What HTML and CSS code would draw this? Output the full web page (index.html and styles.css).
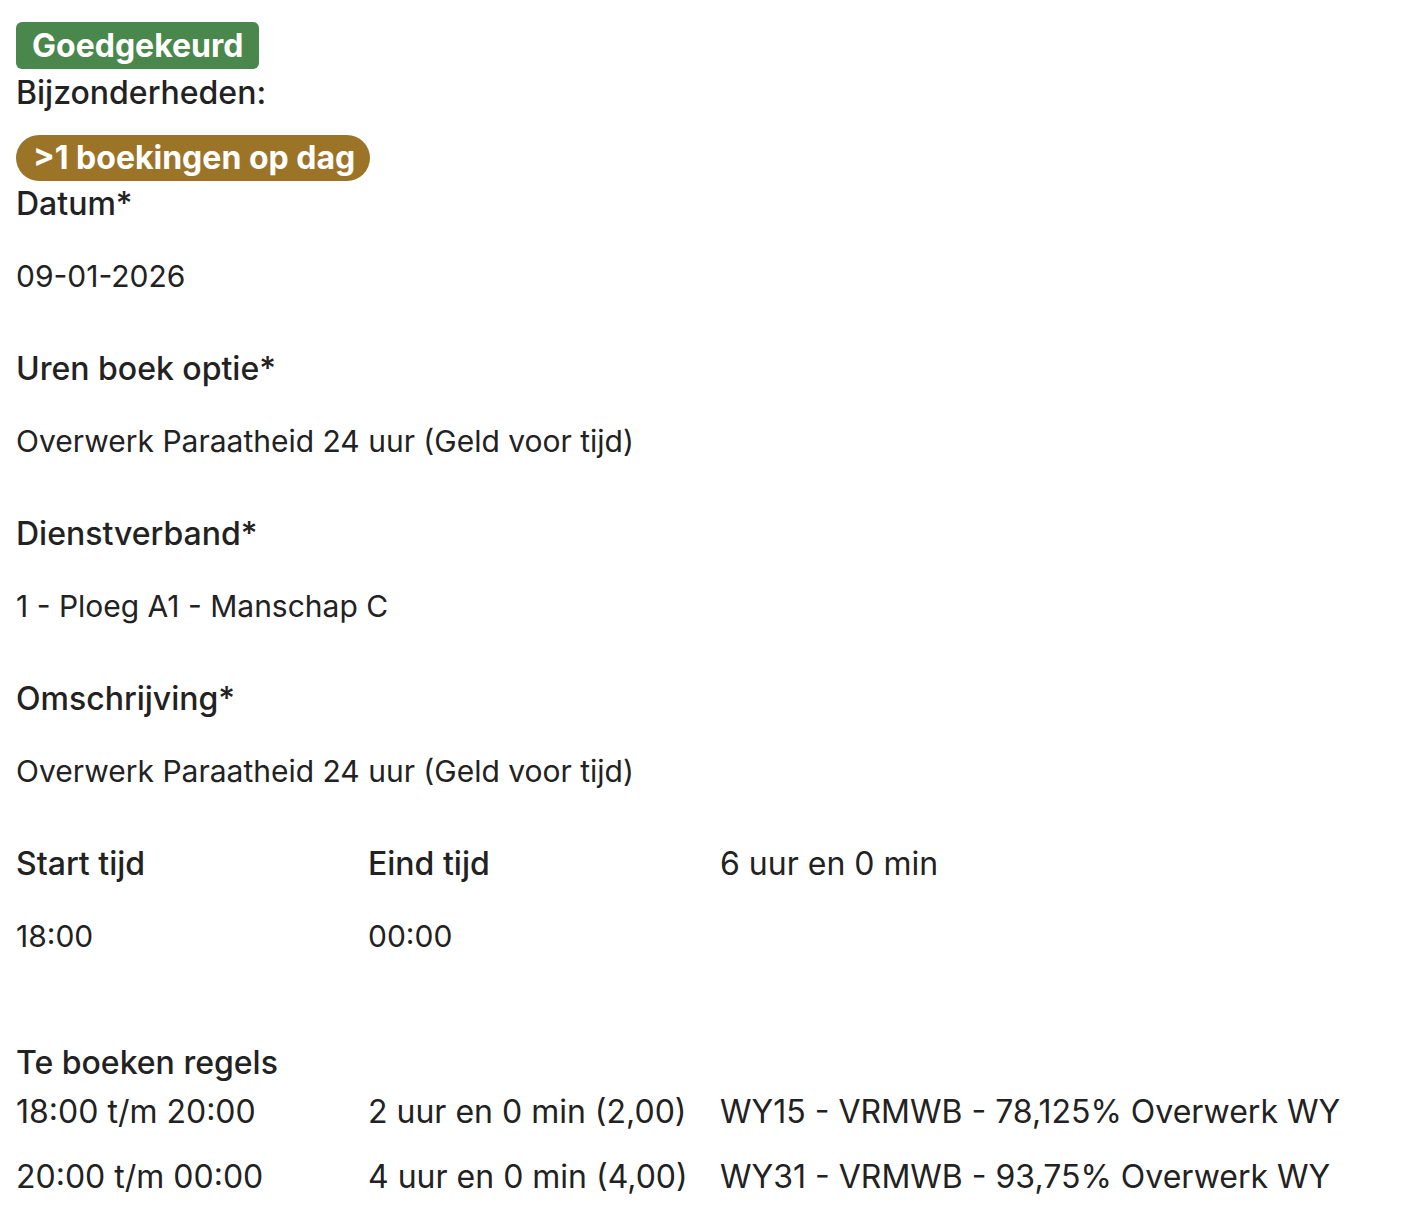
FILE: index.html
```html
<!DOCTYPE html>
<html lang="nl">
<head>
    <meta charset="UTF-8">
    <meta name="viewport" content="width=device-width, initial-scale=1.0">
    <title>Uren boeking</title>
    <link rel="stylesheet" href="styles.css">
</head>
<body>

<div class="booking">
    <span class="status approved">Goedgekeurd</span>
    <div class="remarks-title">Bijzonderheden:</div>
    <span class="status pill warning">&gt;1 boekingen op dag</span>

    <div class="field">
        <div class="field-label">Datum*</div>
        <div class="field-value">09-01-2026</div>
    </div>
    <div class="field">
        <div class="field-label">Uren boek optie*</div>
        <div class="field-value">Overwerk Paraatheid 24 uur (Geld voor tijd)</div>
    </div>
    <div class="field">
        <div class="field-label">Dienstverband*</div>
        <div class="field-value">1 - Ploeg A1 - Manschap C</div>
    </div>
    <div class="field">
        <div class="field-label">Omschrijving*</div>
        <div class="field-value">Overwerk Paraatheid 24 uur (Geld voor tijd)</div>
    </div>

    <div class="time-grid">
        <div class="field">
            <div class="field-label">Start tijd</div>
            <div class="field-value">18:00</div>
        </div>
        <div class="field">
            <div class="field-label">Eind tijd</div>
            <div class="field-value">00:00</div>
        </div>
        <div class="duration">6 uur en 0 min</div>
    </div>

    <div class="lines">
        <div class="lines-title">Te boeken regels</div>
        <div class="line-row">
            <div>18:00 t/m 20:00</div>
            <div>2 uur en 0 min (2,00)</div>
            <div>WY15 - VRMWB - 78,125% Overwerk WY</div>
        </div>
        <div class="line-row">
            <div>20:00 t/m 00:00</div>
            <div>4 uur en 0 min (4,00)</div>
            <div>WY31 - VRMWB - 93,75% Overwerk WY</div>
        </div>
    </div>
</div>

</body>
</html>
```

FILE: styles.css
```css
* {
    box-sizing: border-box;
    margin: 0;
    padding: 0;
}
body {
    font-family: Inter, "Noto Sans", sans-serif;
    font-size: 32px;
    color: #222;
    background-color: #fff;
}
.booking {
    padding: 22px 16px;
}
.status {
    display: inline-block;
    padding: 0 16px;
    height: 47px;
    line-height: 47px;
    font-weight: 700;
    color: #fff;
    border-radius: 6px;
}
.status.approved {
    background-color: #4a874c;
}
.status.pill {
    padding: 0 15px 0 17px;
    border-radius: 23px;
    height: 46px;
    line-height: 46px;
    margin-top: 18px;
}
.status.warning {
    background-color: #9c7428;
}
.remarks-title {
    font-weight: 500;
    line-height: 48px;
}
.field {
    margin-bottom: 47px;
}
.field-label {
    font-weight: 500;
    line-height: 46px;
}
.field-value {
    font-size: 30px;
    line-height: 46px;
    margin-top: 26px;
}
.time-grid {
    display: grid;
    grid-template-columns: 352px 352px 1fr;
    margin-bottom: 34px;
}
.duration {
    line-height: 46px;
}
.lines-title {
    font-weight: 500;
    line-height: 46px;
    margin-bottom: 3px;
}
.line-row {
    display: grid;
    grid-template-columns: 352px 352px 1fr;
    line-height: 46px;
    margin-bottom: 19px;
}
```
